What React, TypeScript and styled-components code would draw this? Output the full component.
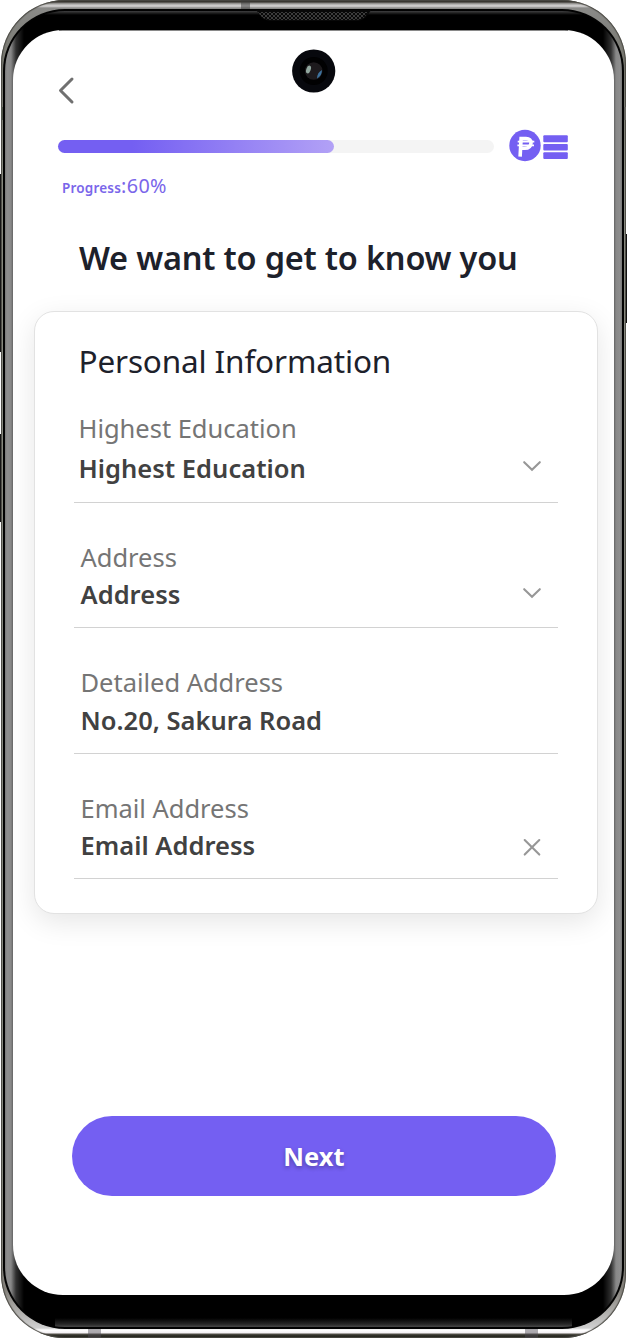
import React from "react";
import styled, { createGlobalStyle } from "styled-components";

const Global = createGlobalStyle`
  * { box-sizing: border-box; }
  html, body { margin: 0; background: #fff; }
  body { font-family: "Noto Sans", sans-serif; overflow: hidden; }
  h1, h2, p { margin: 0; font-weight: 400; }
`;

const Stage = styled.div`
  position: relative;
  width: 627px;
  height: 1338px;
`;

const Frame = styled.div`
  height: 1338px;
  margin: 0 1px;
  padding: 9px 2px 9px;
  border-radius: 64px;
  background: linear-gradient(180deg, #2e2c26 0, #3a3832 2px, #7d7b78 3px, #a9a8a6 4px, #d8d6d6 6px, #8a8a88 8px, #77776f 60px, #8d9085 180px, #8d9085 1150px, #85827c 1290px, #d0d0d0 1328px, #fff 1330px, #f4f0f4 1333px, #55534b 1334px, #24241e 1336px, #2b2b25 1338px);
  box-shadow: inset 0 0 1px 1px #4a4943;
`;

const Rim = styled.div`
  height: 100%;
  padding: 2px;
  border-radius: 62px;
  background: #020202;
`;

const Bezel = styled.div`
  height: 100%;
  padding: 19px 8px 32px;
  border-radius: 60px;
  background:
    linear-gradient(180deg, rgba(70, 70, 72, .9) 0, rgba(40, 40, 40, .8) 2px, transparent 4px) 40px 0 / 537px 5px no-repeat,
    linear-gradient(0deg, #484848 0, #262626 3px, transparent 9px) 50px 100% / 517px 10px no-repeat,
    linear-gradient(90deg, #777 0, #8e8e8e 2px, #888 6px, #636363 8px, #303030 11px, #000 19px, #000 598px, #303030 606px, #636363 609px, #888 611px, #8e8e8e 615px, #777 617px);
`;

const Screen = styled.main`
  display: flex;
  flex-direction: column;
  height: 100%;
  padding: 46px 17px 0 21px;
  border-radius: 50px;
  background: linear-gradient(180deg, #8a8a8a 0, #8a8a8a 1px, #fff 1px) 46px 0 / 509px 100% no-repeat, #fff;
  overflow: hidden;
`;

const Detail = styled.i<{ $x: number; $y: number; $w: number; $h: number; $c: string }>`
  position: absolute;
  left: ${(p) => p.$x}px;
  top: ${(p) => p.$y}px;
  width: ${(p) => p.$w}px;
  height: ${(p) => p.$h}px;
  background: ${(p) => p.$c};
`;

const Speaker = styled.svg`
  position: absolute;
  left: 255px;
  top: 9px;
`;

const Camera = styled.svg`
  position: absolute;
  left: 292px;
  top: 49px;
`;

const Back = styled.button`
  display: block;
  width: 20px;
  height: 30px;
  margin-left: 23px;
  padding: 0;
  border: 0;
  background: none;
`;

const ProgressRow = styled.div`
  display: flex;
  align-items: center;
  height: 34px;
  margin: 23px 0 0 24px;
`;

const Track = styled.div`
  width: 436px;
  height: 13px;
  border-radius: 7px;
  background: #f4f4f4;
`;

const Fill = styled.div`
  height: 100%;
  border-radius: 7px;
  background: linear-gradient(90deg, #745ff2 0, #745ff2 27%, #b2a1f6 100%);
`;

const Coins = styled.svg`
  display: block;
  margin-left: 14px;
`;

const ProgressText = styled.p`
  height: 28px;
  margin: 9px 0 0 28px;
  color: #7a66ea;
  font-size: 19.8px;
  line-height: 28px;
  letter-spacing: 0.35px;
  white-space: nowrap;
`;

const ProgressLabel = styled.span`
  font-size: 13.5px;
  font-weight: 600;
  letter-spacing: 0.2px;
`;

const Title = styled.h1`
  height: 50px;
  margin: 33px 0 0 45px;
  color: #1d212b;
  font-size: 32.5px;
  font-weight: 600;
  line-height: 50px;
  letter-spacing: -0.2px;
  white-space: nowrap;
`;

const Card = styled.section`
  width: 564px;
  height: 603px;
  margin-top: 28px;
  padding: 25px 39px 0;
  border: 1px solid #e2e2e2;
  border-radius: 20px;
  background: #fff;
  box-shadow: 0 8px 28px rgba(0, 0, 0, .1);
`;

const CardTitle = styled.h2`
  height: 49px;
  padding-left: 4.5px;
  color: #1d212b;
  font-size: 31.5px;
  line-height: 48px;
  letter-spacing: -0.15px;
  white-space: nowrap;
`;

const Field = styled.div<{ $h: number; $pad: number; $bottom: number }>`
  display: flex;
  align-items: flex-end;
  justify-content: space-between;
  width: 484px;
  height: ${(p) => p.$h}px;
  padding: 0 16px ${(p) => p.$bottom}px ${(p) => p.$pad}px;
  border-bottom: 1px solid #d2d2d2;
`;

const Label = styled.p<{ $gap: number }>`
  height: 36px;
  margin-bottom: ${(p) => p.$gap}px;
  color: #757575;
  font-size: 25.5px;
  line-height: 36px;
  letter-spacing: -0.02px;
  white-space: nowrap;
`;

const Value = styled.p`
  height: 36px;
  color: #414141;
  font-size: 25.5px;
  font-weight: 600;
  line-height: 36px;
  letter-spacing: 0.02px;
  white-space: nowrap;
`;

const FieldIcon = styled.svg<{ $lift: number }>`
  display: block;
  margin-bottom: ${(p) => p.$lift}px;
`;

const Next = styled.button`
  width: 484px;
  height: 80px;
  margin: 201.5px 0 0 38px;
  border: 0;
  border-radius: 40px;
  background: #745ff2;
  color: #fff;
  font: 700 25.5px "Noto Sans", sans-serif;
  text-shadow: 0 2px 4px rgba(0, 0, 0, .3);
`;

type FieldData = {
  label: string;
  value: string;
  icon?: "down" | "clear";
  h: number;
  pad: number;
  gap: number;
  bottom: number;
  lift: number;
};

const fields: FieldData[] = [
  { label: "Highest Education", value: "Highest Education", icon: "down", h: 117, pad: 4.5, gap: 4, bottom: 16, lift: 5 },
  { label: "Address", value: "Address", icon: "down", h: 125, pad: 6.5, gap: 1, bottom: 15, lift: 4 },
  { label: "Detailed Address", value: "No.20, Sakura Road", h: 126, pad: 6.5, gap: 2, bottom: 15, lift: 0 },
  { label: "Email Address", value: "Email Address", icon: "clear", h: 125, pad: 6.5, gap: 1, bottom: 15, lift: 1 },
];

const details: [number, number, number, number, string][] = [
  [241, 0, 9, 9, "rgba(60,60,60,.5)"],
  [88, 1329, 13, 9, "rgba(80,76,84,.45)"],
  [525, 1329, 13, 9, "rgba(80,76,84,.45)"],
  [1, 107, 2, 13, "#50554a"],
  [624, 107, 2, 13, "#676762"],
  [0, 174, 1, 178, "#151515"],
  [0, 434, 1, 88, "#151515"],
  [626, 234, 1, 89, "#111"],
];

export default function App() {
  return (
    <Stage>
      <Global />
      <Frame>
        <Rim>
          <Bezel>
            <Screen>
              <Back aria-label="Back">
                <svg width="20" height="30" viewBox="0 0 20 30" fill="none" stroke="#707070" strokeWidth="3" strokeLinecap="round" strokeLinejoin="round">
                  <path d="M15 3 3.5 14.5 15 26" />
                </svg>
              </Back>
              <ProgressRow>
                <Track><Fill style={{ width: 276 }} /></Track>
                <Coins width="62" height="34" viewBox="0 0 62 34">
                  <circle cx="17" cy="16.500" r="15.7" fill="#745ff2" />
                  <g fill="none" stroke="#fff">
                    <path d="M12.1 27.600 13.1 9.600h4.900c3.500 0 5.200 1.600 5 4.500-.3 3.300-2.600 5.200-6.200 5.200h-4" strokeWidth="3.6" />
                    <path d="M9.700 12.600h16.600M9.400 16.300h16.600" strokeWidth="1.7" />
                  </g>
                  <g fill="#745ff2">
                    <rect x="35.3" y="6.3" width="24.5" height="7" rx="1" />
                    <rect x="35.3" y="15" width="24.5" height="6.6" rx="1" />
                    <rect x="35.3" y="23.3" width="24.5" height="6.7" rx="1" />
                  </g>
                </Coins>
              </ProgressRow>
              <ProgressText><ProgressLabel>Progress</ProgressLabel>:60%</ProgressText>
              <Title>We want to get to know you</Title>
              <Card>
                <CardTitle>Personal Information</CardTitle>
                {fields.map((f) => (
                  <Field key={f.label} $h={f.h} $pad={f.pad} $bottom={f.bottom}>
                    <div>
                      <Label $gap={f.gap}>{f.label}</Label>
                      <Value>{f.value}</Value>
                    </div>
                    {f.icon && (
                      <FieldIcon $lift={f.lift} width="20" height="30" viewBox="0 0 20 30" fill="none" stroke="#979797" strokeWidth="2.1" strokeLinecap="round">
                        {f.icon === "down" ? <path d="M2.200 11.200 10 18.800 17.800 11.200" /> : <path d="M2.700 8 17.300 22.600M17.300 8 2.700 22.600" />}
                      </FieldIcon>
                    )}
                  </Field>
                ))}
              </Card>
              <Next>Next</Next>
            </Screen>
          </Bezel>
        </Rim>
      </Frame>
      {details.map(([x, y, w, h, c]) => (
        <Detail key={`${x}-${y}`} $x={x} $y={y} $w={w} $h={h} $c={c} />
      ))}
      <Speaker width="117" height="13" viewBox="0 0 117 13">
        <defs>
          <pattern id="mesh" width="4" height="4" patternUnits="userSpaceOnUse">
            <path d="M0 0h2v2H0zM2 2h2v2H2z" fill="#3c3c3c" />
          </pattern>
        </defs>
        <path d="M0 1h117c-3 0-4 11-16 11H17C4 12 4 1 0 1z" fill="#080808" />
        <path d="M3 3h110c-3 5-5 8-12 8H17C9 11 6 8 3 3z" fill="url(#mesh)" />
      </Speaker>
      <Camera width="44" height="44" viewBox="0 0 44 44">
        <circle cx="21.7" cy="22" r="21.6" fill="#07080d" />
        <circle cx="21.7" cy="22" r="14" fill="#010102" />
        <circle cx="21.7" cy="22" r="8.8" fill="#1d1a1d" />
        <ellipse cx="16.5" cy="20.5" rx="2.2" ry="4" fill="#91a79e" transform="rotate(20 16.5 20.5)" />
        <path d="M30 21c0 4-2 7-5 8.500c0-4 2-7 5-8.500z" fill="#3e729d" />
      </Camera>
    </Stage>
  );
}
